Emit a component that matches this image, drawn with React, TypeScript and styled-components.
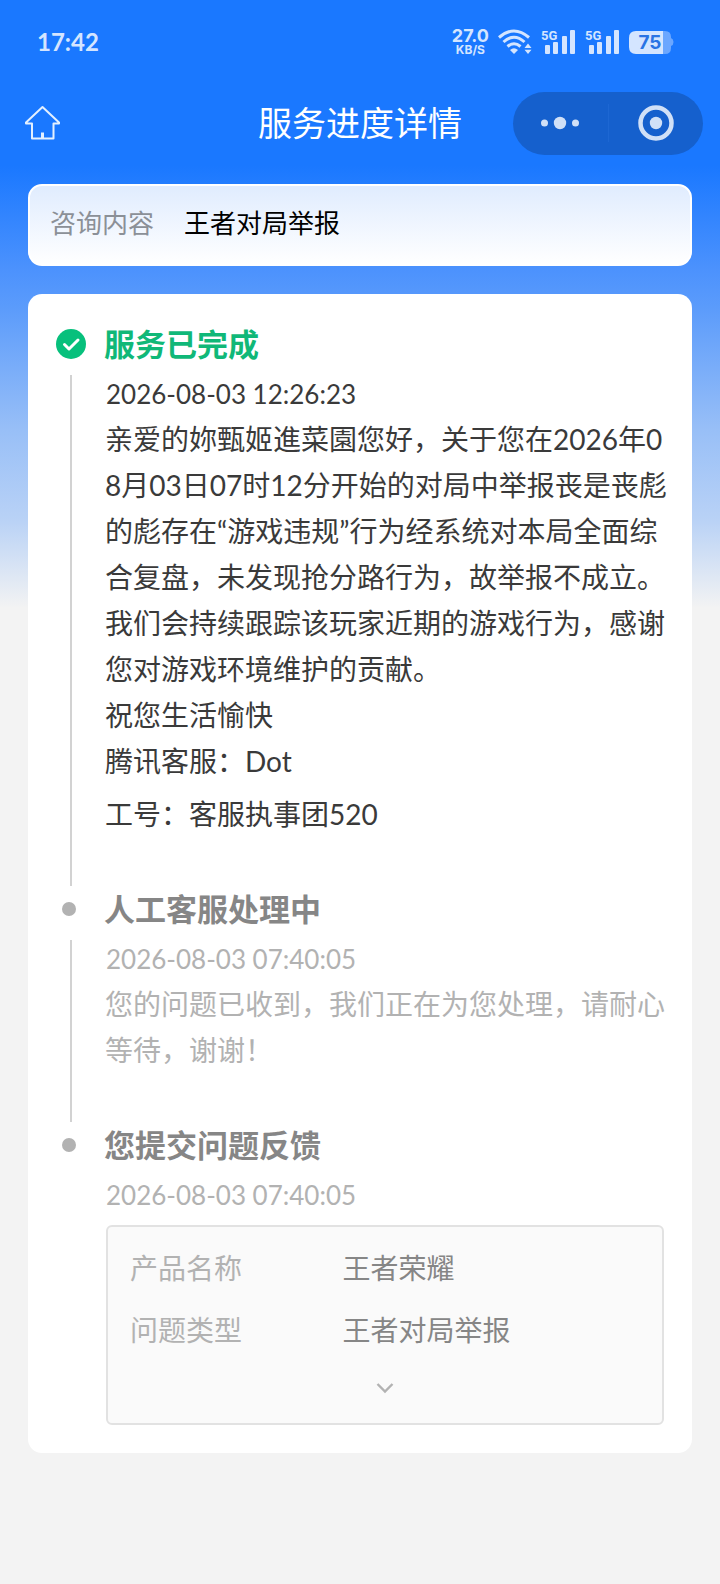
import React from "react";
import styled, { createGlobalStyle } from "styled-components";

const GlobalStyle = createGlobalStyle`
  *, *::before, *::after { box-sizing: border-box; }
  body {
    margin: 0;
    background: #f3f3f3;
    font-family: Lato, "Noto Sans CJK SC", sans-serif;
  }
  button { border: 0; padding: 0; background: none; font: inherit; cursor: pointer; }
  p, h1, h2, dl, dd, dt, ol { margin: 0; padding: 0; }
`;

const Page = styled.div`
  min-height: 100vh;
  padding-bottom: 48px;
  background: linear-gradient(
      180deg,
      #1a78ff 0,
      #1a78ff 166px,
      #4c92fd 270px,
      #5c9cfb 310px,
      #98bff7 430px,
      #b9d2f6 520px,
      #f3f3f3 608px
    )
    #f3f3f3;
`;

const StatusBar = styled.div`
  display: flex;
  align-items: center;
  justify-content: space-between;
  height: 84px;
  padding: 0 46px 0 37px;
  color: #d4e5ff;
`;

const Clock = styled.time`
  font-size: 24px;
  line-height: 32px;
  font-weight: 700;
`;

const StatusIcons = styled.div`
  display: flex;
  align-items: center;
  gap: 8px;
`;

const NetSpeed = styled.div`
  display: flex;
  flex-direction: column;
  align-items: center;
  font-family: Inter, sans-serif;
  font-weight: 700;
`;

const SpeedValue = styled.span`
  font-size: 18px;
  line-height: 16px;
`;

const SpeedUnit = styled.span`
  font-size: 12px;
  line-height: 12px;
`;

const NavBar = styled.header`
  display: grid;
  grid-template-columns: 1fr auto 1fr;
  align-items: center;
  height: 78px;
  padding: 0 17px;
`;

const HomeButton = styled.button`
  display: flex;
  justify-self: start;
  padding-left: 7px;
  color: #e3f0ff;
`;

const Title = styled.h1`
  color: #fff;
  font-size: 34px;
  line-height: 48px;
  font-weight: 400;
`;

const Capsule = styled.div`
  display: flex;
  justify-self: end;
  align-items: center;
  width: 190px;
  height: 63px;
  border-radius: 32px;
  background: #1560cd;
`;

const CapsuleButton = styled.button`
  display: flex;
  flex: 1;
  align-items: center;
  justify-content: center;
  height: 38px;
  color: #d0e0f7;

  & + & { border-left: 1px solid #1d67d3; }
`;

const Main = styled.main`
  display: flex;
  flex-direction: column;
  gap: 28px;
  padding: 22px 28px 0;
`;

const TopicCard = styled.section`
  display: flex;
  gap: 30px;
  padding: 17px 20px 21px;
  border: 2px solid #fff;
  border-radius: 14px;
  background: linear-gradient(180deg, #e0ecfe, #fff);
  font-size: 26px;
  line-height: 40px;
`;

const TopicLabel = styled.span`
  color: #8b9097;
`;

const TopicValue = styled.span`
  color: #000;
`;

const ProgressCard = styled.section`
  padding: 27px 28px 28px 27px;
  border-radius: 14px;
  background: #fff;
`;

const Timeline = styled.ol`
  list-style: none;
`;

const Step = styled.li`
  display: grid;
  grid-template-columns: 32px minmax(0, 1fr);
  column-gap: 17px;
`;

const Rail = styled.div`
  display: flex;
  flex-direction: column;
  align-items: center;
`;

const Marker = styled.div`
  display: flex;
  align-items: center;
  height: 46px;
`;

const Dot = styled.span`
  width: 14px;
  height: 14px;
  margin-right: 4px;
  border-radius: 50%;
  background: #b2b2b2;
`;

const Line = styled.span`
  flex: 1;
  width: 2px;
  margin-top: 8px;
  background: #d2d2d2;
`;

const StepBody = styled.div<{ $last?: boolean }>`
  padding-bottom: ${(p) => (p.$last ? 0 : 49)}px;
`;

const StepTitle = styled.h2<{ $done?: boolean }>`
  margin-bottom: 5px;
  color: ${(p) => (p.$done ? "#10b878" : "#868686")};
  font-size: 31px;
  line-height: 46px;
  font-weight: 700;
`;

const StepTime = styled.time<{ $done?: boolean }>`
  display: block;
  padding-left: 2px;
  color: ${(p) => (p.$done ? "#3a3a3a" : "#b2b2b2")};
  font-size: 26px;
  line-height: 44px;
`;

const Message = styled.p<{ $done?: boolean }>`
  padding-left: 1px;
  color: ${(p) => (p.$done ? "#3a3a3a" : "#b2b2b2")};
  font-size: 28px;
  line-height: 46px;
  white-space: nowrap;

  & + & { margin-top: 7px; }
`;

const Details = styled.div`
  margin: 8px 0 0 2px;
  padding: 10px 22px 8px;
  border: 2px solid #e2e2e2;
  border-radius: 6px;
  background: #fafafa;
`;

const DetailRow = styled.dl`
  display: grid;
  grid-template-columns: 5fr 7fr;
  font-size: 28px;
  line-height: 62px;
`;

const DetailLabel = styled.dt`
  color: #b2b2b2;
`;

const DetailValue = styled.dd`
  color: #868686;
`;

const ExpandButton = styled.button`
  display: flex;
  align-items: center;
  justify-content: center;
  width: 100%;
  height: 54px;
  color: #b2b2b2;
`;

const WifiIcon = () => (
  <svg width="36" height="28" viewBox="0 0 36 28" fill="none" stroke="currentColor" strokeWidth="3" aria-label="Wi-Fi">
    <path d="M2 9.5 Q17 -3.5 32 9.5" />
    <path d="M6.500 14 Q17 4.500 27.500 14" />
    <path d="M10.500 18.500 Q17 13 23.500 18.500" />
    <path d="M13 22 Q17 18.500 21 22 L17 26 Z" fill="currentColor" stroke="none" />
    <path d="M27.500 20 L31 15.500 L34.500 20 Z M27.500 21.800 L31 26 L34.500 21.800 Z" fill="currentColor" stroke="none" />
  </svg>
);

const SignalIcon = () => (
  <svg width="36" height="28" viewBox="0 0 36 28" fill="currentColor" aria-label="5G">
    <text x="0" y="12" fontFamily="Roboto, sans-serif" fontWeight="700" fontSize="13">5G</text>
    <rect x="4" y="17" width="5" height="9" rx="1" />
    <rect x="12" y="14" width="5" height="12" rx="1" />
    <rect x="21" y="8" width="5" height="18" rx="1" />
    <rect x="29" y="2" width="5" height="24" rx="1" />
  </svg>
);

const BatteryIcon = () => (
  <svg width="45" height="24" viewBox="0 0 45 24" aria-label="75%">
    <path d="M33 1 H36 Q42 1 42 7 V8 Q44.500 9 44.500 12 Q44.500 15 42 16 V18 Q42 24 36 24 H33 Z" fill="#6ba7ff" />
    <path d="M7 1 H34 V24 H7 Q0 24 0 17 V8 Q0 1 7 1 Z" fill="#d4e5ff" />
    <text x="21" y="19" textAnchor="middle" fontFamily="Inter, sans-serif" fontWeight="700" fontSize="19" fill="#2a74e4">75</text>
  </svg>
);

const HomeIcon = () => (
  <svg width="38" height="38" viewBox="0 0 38 38" fill="none" stroke="currentColor" strokeWidth="2" strokeLinejoin="round">
    <path d="M18.500 3 L35 18.500 V19.500 H29.500 V34.500 H8 V19.500 H2 V18.500 Z" />
    <path d="M18.500 34 V28.500" strokeWidth="3" />
  </svg>
);

const MoreIcon = () => (
  <svg width="38" height="14" viewBox="0 0 38 14" fill="currentColor">
    <circle cx="3.500" cy="7" r="3.500" />
    <circle cx="19" cy="7" r="6.200" />
    <circle cx="34.500" cy="7" r="3.500" />
  </svg>
);

const CloseIcon = () => (
  <svg width="36" height="36" viewBox="0 0 36 36">
    <circle cx="18" cy="18" r="15.500" fill="none" stroke="currentColor" strokeWidth="4.500" />
    <circle cx="18" cy="18" r="6.200" fill="currentColor" />
  </svg>
);

const DoneIcon = () => (
  <svg width="30" height="30" viewBox="0 0 30 30" aria-label="已完成">
    <circle cx="15" cy="15" r="15" fill="#07c07c" />
    <path d="M8.500 15.500 L13 20 L22 11" fill="none" stroke="#fff" strokeWidth="3" strokeLinecap="round" strokeLinejoin="round" />
  </svg>
);

const ChevronIcon = () => (
  <svg width="18" height="12" viewBox="0 0 18 12" fill="none" stroke="currentColor" strokeWidth="2.400">
    <path d="M1.500 2 L9 9.500 L16.500 2" />
  </svg>
);

const REPLY_LINES = [
  "亲爱的妳甄姬進菜園您好，关于您在2026年0",
  "8月03日07时12分开始的对局中举报丧是丧彪",
  "的彪存在“游戏违规”行为经系统对本局全面综",
  "合复盘，未发现抢分路行为，故举报不成立。",
  "我们会持续跟踪该玩家近期的游戏行为，感谢",
  "您对游戏环境维护的贡献。",
  "祝您生活愉快",
  "腾讯客服：Dot",
];

const PENDING_LINES = ["您的问题已收到，我们正在为您处理，请耐心", "等待，谢谢！"];

const DETAILS = [
  { label: "产品名称", value: "王者荣耀" },
  { label: "问题类型", value: "王者对局举报" },
];

const withBreaks = (lines: string[]) =>
  lines.map((line, i) => (
    <React.Fragment key={line}>
      {i > 0 && <br />}
      {line}
    </React.Fragment>
  ));

export default function App() {
  return (
    <Page>
      <GlobalStyle />
      <StatusBar>
        <Clock>17:42</Clock>
        <StatusIcons>
          <NetSpeed>
            <SpeedValue>27.0</SpeedValue>
            <SpeedUnit>KB/S</SpeedUnit>
          </NetSpeed>
          <WifiIcon />
          <SignalIcon />
          <SignalIcon />
          <BatteryIcon />
        </StatusIcons>
      </StatusBar>

      <NavBar>
        <HomeButton aria-label="首页">
          <HomeIcon />
        </HomeButton>
        <Title>服务进度详情</Title>
        <Capsule>
          <CapsuleButton aria-label="更多">
            <MoreIcon />
          </CapsuleButton>
          <CapsuleButton aria-label="关闭">
            <CloseIcon />
          </CapsuleButton>
        </Capsule>
      </NavBar>

      <Main>
        <TopicCard>
          <TopicLabel>咨询内容</TopicLabel>
          <TopicValue>王者对局举报</TopicValue>
        </TopicCard>

        <ProgressCard>
          <Timeline>
            <Step>
              <Rail>
                <Marker>
                  <DoneIcon />
                </Marker>
                <Line />
              </Rail>
              <StepBody>
                <StepTitle $done>服务已完成</StepTitle>
                <StepTime $done>2026-08-03 12:26:23</StepTime>
                <Message $done>{withBreaks(REPLY_LINES)}</Message>
                <Message $done>工号：客服执事团520</Message>
              </StepBody>
            </Step>

            <Step>
              <Rail>
                <Marker>
                  <Dot />
                </Marker>
                <Line />
              </Rail>
              <StepBody>
                <StepTitle>人工客服处理中</StepTitle>
                <StepTime>2026-08-03 07:40:05</StepTime>
                <Message>{withBreaks(PENDING_LINES)}</Message>
              </StepBody>
            </Step>

            <Step>
              <Rail>
                <Marker>
                  <Dot />
                </Marker>
              </Rail>
              <StepBody $last>
                <StepTitle>您提交问题反馈</StepTitle>
                <StepTime>2026-08-03 07:40:05</StepTime>
                <Details>
                  {DETAILS.map((d) => (
                    <DetailRow key={d.label}>
                      <DetailLabel>{d.label}</DetailLabel>
                      <DetailValue>{d.value}</DetailValue>
                    </DetailRow>
                  ))}
                  <ExpandButton aria-label="展开">
                    <ChevronIcon />
                  </ExpandButton>
                </Details>
              </StepBody>
            </Step>
          </Timeline>
        </ProgressCard>
      </Main>
    </Page>
  );
}
